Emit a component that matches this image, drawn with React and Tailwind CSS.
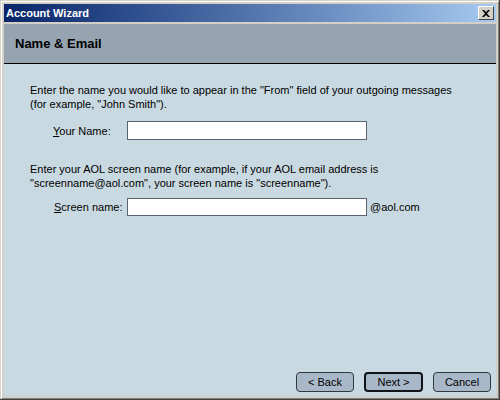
export default function App() {
  const font = { fontFamily: 'Tahoma, "Liberation Sans", Arial, sans-serif' }
  return (
    <div className="w-[500px] h-[400px] bg-[#d4d0c8] relative" style={font}>
      <div className="absolute inset-0 border-r border-b border-[#404040]" />
      <div className="absolute inset-[1px] border border-[#ffffff] border-r-[#808080] border-b-[#808080]" />
      <div className="absolute left-[4px] top-[4px] right-[4px] bottom-[4px] flex flex-col">
        <div className="h-[18px] flex items-center justify-between pl-[2px] pr-[2px] bg-gradient-to-r from-[#0a246a] to-[#a6caf0]">
          <span className="text-white font-bold text-[11px] leading-none">Account Wizard</span>
          <div className="w-[16px] h-[14px] bg-[#d4d0c8] border border-white border-r-[#404040] border-b-[#404040] flex items-center justify-center">
            <svg width="8" height="7" viewBox="0 0 8 7"><path d="M0 0h2l2 2 2-2h2L5 3.5 8 7H6L4 5 2 7H0l3-3.5z" fill="#000" /></svg>
          </div>
        </div>
        <div className="h-[2px] bg-[#d4d0c8]" />
        <div className="h-[40px] bg-[#95a4b0] flex items-center pl-[11px] border-b border-black">
          <span className="text-[13px] font-bold text-black">Name &amp; Email</span>
        </div>
        <div className="flex-1 bg-[#c9d9e1] flex flex-col pl-[26px] pt-[19px] text-[11px] text-black leading-[14px]">
          <p>Enter the name you would like to appear in the "From" field of your outgoing messages<br />(for example, "John Smith").</p>
          <div className="flex items-center mt-[10px]">
            <span className="w-[97px] pl-[23px]"><u>Y</u>our Name:</span>
            <div className="w-[240px] h-[19px] bg-white border border-[#5a6470]" />
          </div>
          <p className="mt-[22px]">Enter your AOL screen name (for example, if your AOL email address is<br />"screenname@aol.com", your screen name is "screenname").</p>
          <div className="flex items-center mt-[8px]">
            <span className="w-[97px] pl-[24px]"><u>S</u>creen name:</span>
            <div className="w-[240px] h-[18px] bg-white border border-[#5a6470]" />
            <span className="ml-[3px]">@aol.com</span>
          </div>
          <div className="flex-1" />
          <div className="flex justify-end gap-[10px] pr-[5px] pb-[4px]">
            <button className="w-[58px] h-[20px] rounded-[4px] border border-[#303840] bg-[#a9b8c8] text-[11px]">&lt; Back</button>
            <button className="w-[59px] h-[20px] rounded-[4px] border-2 border-[#101418] bg-[#a9b8c8] text-[11px]">Next &gt;</button>
            <button className="w-[58px] h-[20px] rounded-[4px] border border-[#303840] bg-[#a9b8c8] text-[11px]">Cancel</button>
          </div>
        </div>
      </div>
    </div>
  )
}
